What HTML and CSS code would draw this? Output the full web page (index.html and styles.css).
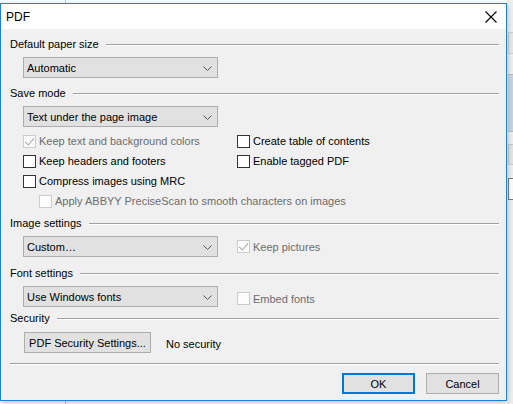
FILE: index.html
```html
<!DOCTYPE html>
<html>
<head>
<meta charset="utf-8">
<link rel="stylesheet" href="styles.css">
</head>
<body>
<div class="desktop">
  <div class="bg-window">
    <div class="bg-divider"></div>
    <div class="bg-side">
      <div class="bg-box b1"></div>
      <div class="bg-box b2"></div>
      <div class="bg-box b3"></div>
      <div class="bg-box b4"></div>
    </div>
  </div>

  <div class="dialog">
    <div class="titlebar">
      <span class="title">PDF</span>
      <svg class="close" width="12" height="12" viewBox="0 0 12 12">
        <path d="M0.5 0.5 L11.5 11.5 M11.5 0.5 L0.5 11.5" stroke="#000" stroke-width="1.1" fill="none"/>
      </svg>
    </div>

    <div class="body">
      <div class="section-head s-paper"><span>Default paper size</span><i class="rule"></i></div>
      <div class="row">
        <div class="combo"><span>Automatic</span><svg class="chev" width="9" height="5" viewBox="0 0 9 5"><path d="M0.5 0.5 L4.5 4.5 L8.5 0.5" stroke="#555" stroke-width="1" fill="none"/></svg></div>
      </div>

      <div class="section-head s-save"><span>Save mode</span><i class="rule"></i></div>
      <div class="row">
        <div class="combo"><span>Text under the page image</span><svg class="chev" width="9" height="5" viewBox="0 0 9 5"><path d="M0.5 0.5 L4.5 4.5 L8.5 0.5" stroke="#555" stroke-width="1" fill="none"/></svg></div>
      </div>
      <div class="checks">
        <div class="check-grid">
          <label class="cb disabled"><i class="box checked"></i><span>Keep text and background colors</span></label>
          <label class="cb"><i class="box"></i><span>Create table of contents</span></label>
          <label class="cb"><i class="box"></i><span>Keep headers and footers</span></label>
          <label class="cb"><i class="box"></i><span>Enable tagged PDF</span></label>
          <label class="cb"><i class="box"></i><span>Compress images using MRC</span></label>
          <span></span>
        </div>
        <label class="cb disabled indent"><i class="box"></i><span>Apply ABBYY PreciseScan to smooth characters on images</span></label>
      </div>

      <div class="section-head s-image"><span>Image settings</span><i class="rule"></i></div>
      <div class="row split">
        <div class="combo"><span>Custom…</span><svg class="chev" width="9" height="5" viewBox="0 0 9 5"><path d="M0.5 0.5 L4.5 4.5 L8.5 0.5" stroke="#555" stroke-width="1" fill="none"/></svg></div>
        <label class="cb disabled"><i class="box checked"></i><span>Keep pictures</span></label>
      </div>

      <div class="section-head s-font"><span>Font settings</span><i class="rule"></i></div>
      <div class="row split">
        <div class="combo"><span>Use Windows fonts</span><svg class="chev" width="9" height="5" viewBox="0 0 9 5"><path d="M0.5 0.5 L4.5 4.5 L8.5 0.5" stroke="#555" stroke-width="1" fill="none"/></svg></div>
        <label class="cb disabled low"><i class="box"></i><span>Embed fonts</span></label>
      </div>

      <div class="section-head s-sec"><span>Security</span><i class="rule"></i></div>
      <div class="row sec-row">
        <button class="btn sec-btn">PDF Security Settings...</button>
        <span class="sec-status">No security</span>
      </div>

      <div class="sep"></div>

      <div class="footer">
        <button class="btn ok">OK</button>
        <button class="btn">Cancel</button>
      </div>
    </div>
  </div>
</div>
</body>
</html>
```

FILE: styles.css
```css
* { box-sizing: border-box; }

html, body {
  margin: 0;
  padding: 0;
}

body {
  width: 513px;
  height: 404px;
  overflow: hidden;
  font-family: "Liberation Sans", Arial, sans-serif;
  font-size: 11px;
  color: #000;
  background: #f3f3f3;
}

.desktop {
  position: relative;
  width: 513px;
  height: 404px;
}

.bg-window {
  position: absolute;
  inset: 0;
  background: #ffffff;
}

.bg-divider {
  position: absolute;
  left: 65px;
  top: 0;
  width: 1px;
  height: 404px;
  background: #c8c8c8;
}

.bg-side {
  position: absolute;
  left: 507px;
  top: 0;
  width: 6px;
  height: 404px;
  background: #eeeeee;
}

.bg-box {
  position: absolute;
  left: 1px;
  width: 6px;
}
.b1 { top: 32px; height: 22px; border: 1px solid #cfcfcf; background: #e6e6e6; }
.b2 { top: 74px; height: 58px; background: #c9d4e0; border-top: 1px solid #bbb; border-bottom: 1px solid #bbb; }
.b3 { top: 144px; height: 21px; border: 1px solid #c8c8c8; background: #e3e3e3; }
.b4 { top: 178px; height: 22px; border: 1px solid #7a7a7a; background: #fafafa; }

.dialog {
  position: absolute;
  left: 0;
  top: 3px;
  width: 507px;
  height: 398px;
  border: 1px solid #1883d7;
  background: #f0f0f0;
  box-shadow: 0 2px 6px rgba(0,0,0,0.25);
  display: flex;
  flex-direction: column;
}

.titlebar {
  height: 25px;
  background: #ffffff;
  display: flex;
  align-items: center;
  justify-content: space-between;
  padding: 0 9px 0 5px;
  flex: none;
}

.title {
  font-size: 12px;
  line-height: 16px;
  margin-top: 1px;
}

.close {
  display: block;
  margin-top: 1px;
}

.body {
  padding: 7px 7px 0 9px;
  flex: 1;
}

.section-head {
  display: flex;
  align-items: center;
  height: 16px;
  line-height: 16px;
}

.section-head span {
  flex: none;
}

.section-head .rule {
  flex: 1;
  height: 2px;
  margin-left: 7px;
  margin-top: 2px;
  border-top: 1px solid #a0a0a0;
  border-bottom: 1px solid #ffffff;
}

.s-save { margin-top: 7px; }
.s-image { margin-top: 4px; }
.s-font { margin-top: 8px; }
.s-sec { margin-top: 3px; }

.row {
  padding-left: 13px;
  margin-top: 5px;
  display: flex;
  align-items: center;
}

.combo {
  width: 195px;
  height: 21px;
  background: #e1e1e1;
  border: 1px solid #adadad;
  display: flex;
  align-items: center;
  justify-content: space-between;
  padding: 0 5px 0 3px;
  flex: none;
}

.combo span {
  line-height: 16px;
  white-space: nowrap;
}

.chev {
  display: block;
  margin-top: 1px;
}

.checks {
  padding-left: 13px;
  margin-top: 4px;
}

.check-grid {
  display: grid;
  grid-template-columns: 214px 1fr;
  grid-auto-rows: 20px;
}

.cb {
  display: flex;
  align-items: center;
  height: 20px;
  gap: 3px;
  white-space: nowrap;
}

.cb .box {
  width: 13px;
  height: 13px;
  border: 1px solid #333333;
  background: #ffffff;
  flex: none;
  position: relative;
}

.cb.disabled {
  color: #6d6d6d;
}

.cb.disabled .box {
  border-color: #cccccc;
  background: #fcfcfc;
}

.cb .box.checked::after {
  content: "";
  position: absolute;
  left: 3px;
  top: 0px;
  width: 4px;
  height: 8px;
  border-right: 1px solid #a6a6a6;
  border-bottom: 1px solid #a6a6a6;
  transform: rotate(40deg);
}

.cb.indent {
  padding-left: 16px;
}

.split .cb {
  margin-left: 19px;
}

.split .cb.low {
  margin-top: 2px;
  margin-bottom: -2px;
}

.btn {
  font-family: inherit;
  font-size: inherit;
  color: #000;
  background: #e1e1e1;
  border: 1px solid #adadad;
  height: 21px;
  padding: 0;
  margin: 0;
  line-height: 16px;
  white-space: nowrap;
}

.sec-row {
  margin-top: 6px;
  padding-left: 14px;
}

.sec-btn {
  width: 127px;
}

.sec-status {
  margin-left: 15px;
  margin-top: 2px;
}

.sep {
  margin-top: 10px;
  height: 2px;
  border-top: 1px solid #a0a0a0;
  border-bottom: 1px solid #ffffff;
}

.footer {
  display: flex;
  justify-content: flex-end;
  gap: 11px;
  margin-top: 8px;
}

.footer .btn {
  width: 73px;
}

.footer .ok {
  border: 2px solid #0078d7;
}
```
